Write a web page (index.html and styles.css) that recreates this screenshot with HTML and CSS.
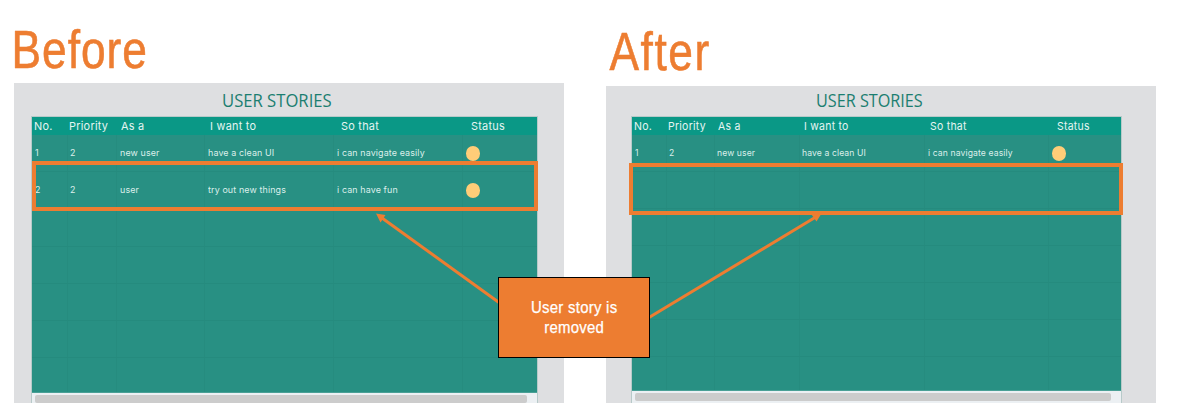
FILE: index.html
```html
<!DOCTYPE html>
<html lang="en">
<head>
<meta charset="utf-8">
<title>User stories: before and after</title>
<link rel="stylesheet" href="styles.css">
</head>
<body>
<main class="slide">
  <section class="side before">
    <h1><span>Before</span></h1>
    <div class="panel">
      <h2><span>USER STORIES</span></h2>
      <div class="table">
        <div class="row head"><div><span>No.</span></div><div><span>Priority</span></div><div><span>As a</span></div><div><span>I want to</span></div><div><span>So that</span></div><div><span>Status</span></div></div>
        <div class="row"><div><span>1</span></div><div><span>2</span></div><div><span>new user</span></div><div><span>have a clean UI</span></div><div><span>i can navigate easily</span></div><div><i class="dot"></i></div></div>
        <div class="row"><div><span>2</span></div><div><span>2</span></div><div><span>user</span></div><div><span>try out new things</span></div><div><span>i can have fun</span></div><div><i class="dot"></i></div></div>
        <div class="row"><div></div><div></div><div></div><div></div><div></div><div></div></div>
        <div class="row"><div></div><div></div><div></div><div></div><div></div><div></div></div>
        <div class="row"><div></div><div></div><div></div><div></div><div></div><div></div></div>
        <div class="row"><div></div><div></div><div></div><div></div><div></div><div></div></div>
        <div class="row last"><div></div><div></div><div></div><div></div><div></div><div></div></div>
        <div class="scroll"><div class="thumb"></div></div>
      </div>
    </div>
  </section>
  <section class="side after">
    <h1><span>After</span></h1>
    <div class="panel">
      <h2><span>USER STORIES</span></h2>
      <div class="table">
        <div class="row head"><div><span>No.</span></div><div><span>Priority</span></div><div><span>As a</span></div><div><span>I want to</span></div><div><span>So that</span></div><div><span>Status</span></div></div>
        <div class="row"><div><span>1</span></div><div><span>2</span></div><div><span>new user</span></div><div><span>have a clean UI</span></div><div><span>i can navigate easily</span></div><div><i class="dot"></i></div></div>
        <div class="row"><div></div><div></div><div></div><div></div><div></div><div></div></div>
        <div class="row"><div></div><div></div><div></div><div></div><div></div><div></div></div>
        <div class="row"><div></div><div></div><div></div><div></div><div></div><div></div></div>
        <div class="row"><div></div><div></div><div></div><div></div><div></div><div></div></div>
        <div class="row"><div></div><div></div><div></div><div></div><div></div><div></div></div>
        <div class="row last"><div></div><div></div><div></div><div></div><div></div><div></div></div>
        <div class="scroll"><div class="thumb"></div></div>
      </div>
    </div>
  </section>
  <svg class="marks" viewBox="0 0 1178 413" aria-hidden="true">
    <g fill="none" stroke="#ed7d31">
      <rect x="34" y="163" width="502" height="46" stroke-width="4"/>
      <rect x="631" y="165" width="490" height="48" stroke-width="4"/>
      <path d="M499 302.500 382 218M649 317.500 815 217.500" stroke-width="3"/>
    </g>
    <path d="M376 213.500 385.500 215 380.500 222.500ZM821.500 213.500 816.500 221.500 811.500 214.500Z" fill="#ed7d31"/>
  </svg>
  <div class="callout"><span>User story is<br>removed</span></div>
</main>
</body>
</html>
```
FILE: styles.css
```css
* { box-sizing: border-box; }
body { margin: 0; background: #fff; overflow: hidden; }
.slide { position: relative; display: flex; width: 1178px; height: 413px; padding-left: 14px; gap: 42px; }
.side { width: 550px; height: 403px; display: flex; flex-direction: column; }
h1, h2 { margin: 0; font-weight: 400; white-space: nowrap; }
h1 { height: 83px; padding-top: 21px; color: #ed7d31; font: 400 54px/56px "Liberation Sans", Arial, sans-serif; -webkit-text-stroke: .6px #ed7d31; }
h1 span, h2 span, .row span, .callout span { display: inline-block; transform-origin: 0 50%; }
.before h1 span { transform: translateX(-2.500px) scaleX(.82); letter-spacing: 1.200px; }
.after h1 { height: 86px; padding-top: 23px; }
.after h1 span { transform: translateX(3.500px) scaleX(.82); letter-spacing: 1.900px; }
.panel { flex: 1; overflow: hidden; padding: 0 26px 0 17px; background: #dedfe1; }
.after .panel { padding: 0 34px 0 25px; }
h2 { height: 33px; padding: 5px 0 0 191px; color: #1b7e70; font: 400 18px/24px "Open Sans", sans-serif; }
h2 span { transform: scaleX(.925); }
.after h2 { height: 30px; padding: 2px 0 0 185px; }
.after h2 span { transform: scaleX(.9); }
.table { --cols: 35.5px 49px 88px 129.5px 129px 1fr; --sx: .99; border: 1px solid #b7cac9; border-bottom: 0; height: 288px; background: #289083; }
.after .table { --cols: 34.5px 48px 85px 125px 124.5px 1fr; --sx: .955; }
.row { display: grid; grid-template-columns: var(--cols); height: 37.2px; color: #dcefeb; font: 400 9px/36px Inter, sans-serif; letter-spacing: .12px; white-space: nowrap; border-bottom: 1px solid #258b7e; }
.after .row { height: 37px; }
.row > div { padding-left: 3px; border-right: 1px solid #268c7f; }
.row > div:nth-child(2) { padding-left: 2px; }
.row > div:nth-child(4) { padding-left: 3px; }
.after .row:not(.head) > div:nth-child(3), .after .row:not(.head) > div:nth-child(4) { padding-left: 2px; }
.row > div:last-child { border: 0; display: flex; align-items: center; padding-left: 2.500px; }
.row span { transform: scaleX(var(--sx)); }
.row.head, .after .row.head { height: 18px; background: #0a9886; color: #e5f5f2; font-size: 11px; line-height: 19px; letter-spacing: .25px; border: 0; }
.row.head > div { padding-left: 1.500px; border: 0; }
.row.head > div:nth-child(3) { padding-left: 4px; }
.row.head > div:nth-child(4) { padding-left: 5.500px; }
.row.head > div:nth-child(5) { padding-left: 6.500px; }
.row.head > div:nth-child(6) { padding-left: 8px; }
.after .row.head > div:nth-child(3) { padding-left: 3px; }
.after .row.head > div:nth-child(4) { padding-left: 4.500px; }
.after .row.head > div:nth-child(5) { padding-left: 5.500px; }
.row.last { height: 34.500px; border-bottom: 1px solid #4aa096; }
.after .row.last { height: 34px; border-bottom: 1px solid #4aa096; }
.dot { width: 14.500px; height: 15px; border-radius: 50%; background: #ffcd78; }
.scroll { height: 13px; background: #ecf0f3; padding: 2px 10px 0 3px; }
.thumb { height: 8px; border-radius: 2px; background: #ccc; }
.marks { position: absolute; inset: 0; width: 1178px; height: 413px; }
.callout { position: absolute; left: 498px; top: 277px; width: 152px; height: 81px; display: flex; align-items: center; justify-content: center; border: 1px solid #000; background: #ed7d31; color: #fff; text-align: center; font: 400 17px/20px "Liberation Sans", Arial, sans-serif; -webkit-text-stroke: .25px #fff; }
.callout span { transform: scaleX(.88); transform-origin: center; letter-spacing: .3px; }
```
